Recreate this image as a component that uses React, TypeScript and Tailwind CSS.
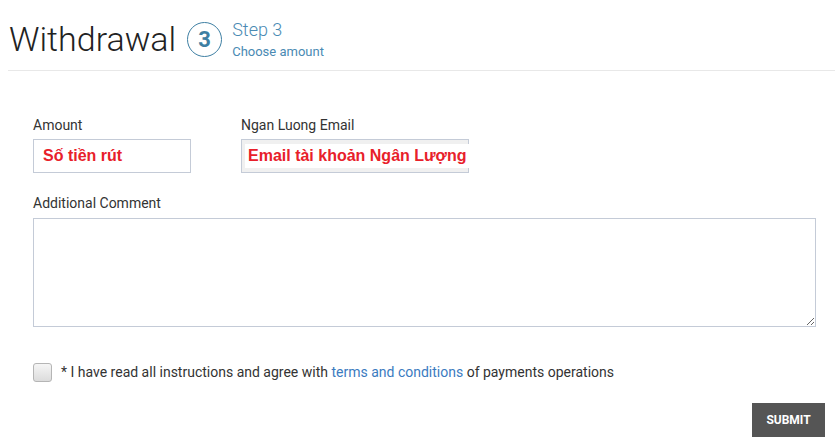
import React, { useState } from "react";

export default function App() {
  const [agree, setAgree] = useState(false);

  return (
    <div className="w-[835px] h-[445px] bg-white font-['Roboto',sans-serif] text-[#333]">
      {/* header */}
      <div className="ml-[8px] border-b border-[#e8e8e8] h-[71px] flex items-start">
        <h1 className="mt-[22px] ml-[1px] text-[34px] font-light text-[#222] leading-none">
          Withdrawal
        </h1>
        <div className="mt-[22px] ml-[11px] w-[35px] h-[35px] rounded-full border border-[#3e7fa3] flex items-center justify-center text-[22px] font-bold text-[#3e7fa3]">
          3
        </div>
        <div className="mt-[19px] ml-[10px] flex flex-col text-[#4a8ab3]">
          <span className="text-[18px] font-light leading-[22px]">Step 3</span>
          <span className="mt-[3px] text-[13px] leading-[15px]">Choose amount</span>
        </div>
      </div>

      {/* form */}
      <div className="px-[33px] pt-[46px]">
        <div className="flex gap-[50px]">
          <div className="flex flex-col">
            <label className="text-[14px] leading-[17px]">Amount</label>
            <div className="mt-[5px] w-[158px] h-[34px] border border-[#c4cbd7] flex items-center px-[9px]">
              <span className="font-['Liberation_Sans',Arial,sans-serif] font-bold text-[16px] text-[#e8202a]">
                Số tiền rút
              </span>
            </div>
          </div>
          <div className="flex flex-col">
            <label className="text-[14px] leading-[17px]">Ngan Luong Email</label>
            <div className="mt-[5px] w-[228px] h-[34px] border border-[#c4cbd7] bg-[#f0f0f0] flex items-center px-[3px]">
              <span className="bg-white px-[3px] font-['Liberation_Sans',Arial,sans-serif] font-bold text-[16px] leading-[24px] text-[#e8202a] whitespace-nowrap">
                Email tài khoản Ngân Lượng
              </span>
            </div>
          </div>
        </div>

        <label className="block mt-[22px] text-[14px] leading-[17px]">Additional Comment</label>
        <textarea className="block mt-[6px] w-[783px] h-[109px] border border-[#c4cbd7] outline-none resize" />

        <div className="mt-[35px] flex items-center">
          <button
            onClick={() => setAgree(!agree)}
            className="w-[19px] h-[19px] rounded-[3px] border border-[#b5b5b5] bg-gradient-to-b from-[#f5f5f5] to-[#dcdcdc] flex items-center justify-center text-[12px] text-[#333]"
          >
            {agree ? "✓" : ""}
          </button>
          <span className="ml-[9px] text-[14px]">
            * I have read all instructions and agree with{" "}
            <a className="text-[#3b7bbf]">terms and conditions</a> of payments operations
          </span>
        </div>

        <div className="flex justify-end mt-[20px] -mr-[23px]">
          <button className="w-[73px] h-[34px] bg-[#555] text-white text-[12px] font-bold uppercase">
            Submit
          </button>
        </div>
      </div>
    </div>
  );
}
